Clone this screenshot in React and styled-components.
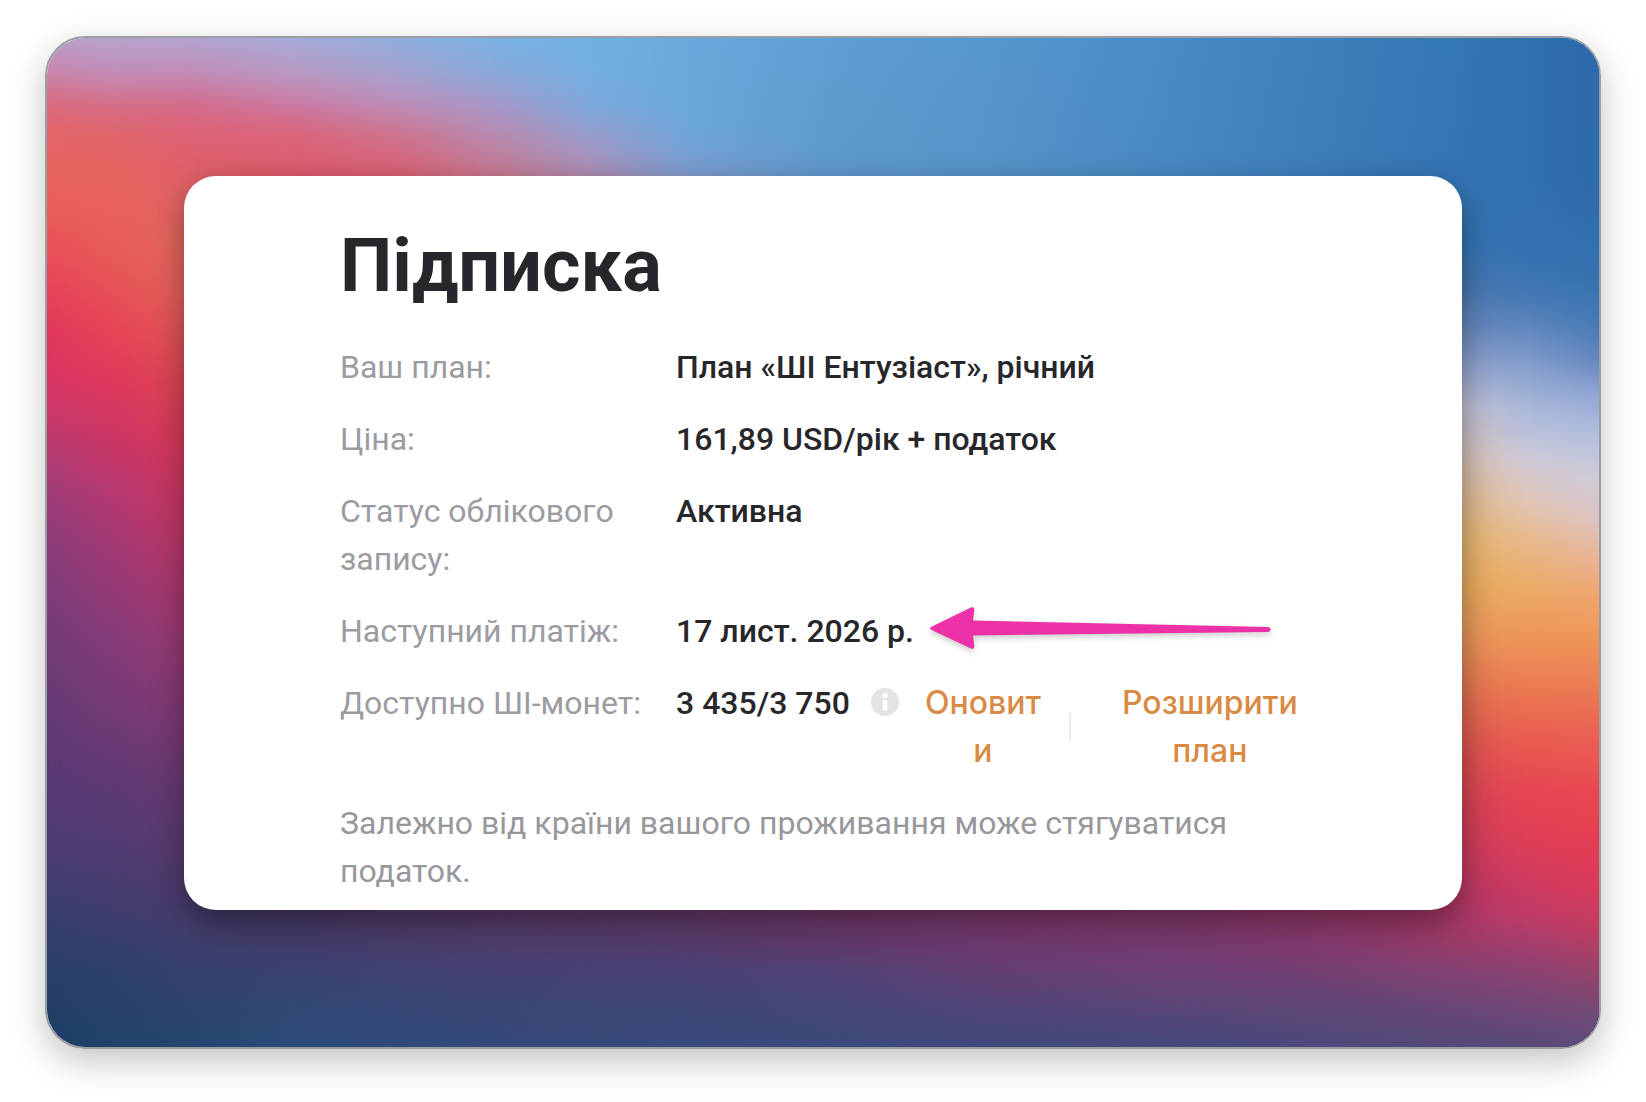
import styled, { createGlobalStyle } from "styled-components";

const GlobalStyle = createGlobalStyle`
  * {
    box-sizing: border-box;
  }
  body {
    margin: 0;
    background-color: #fff;
    color: #27272b;
    font-family: Roboto, "Open Sans", sans-serif;
    font-size: 32px;
    line-height: 48px;
  }
`;

const Page = styled.div`
  padding: 36px 45px 53px;
`;

const Frame = styled.div`
  display: grid;
  overflow: hidden;
  border: 2px solid #9a9da1;
  border-radius: 40px;
  box-shadow: 0 12px 36px rgba(0, 0, 0, 0.24);
`;

const Wallpaper = styled.div`
  grid-area: 1 / 1;
  display: grid;
`;

const Strip = styled.div`
  grid-area: 1 / 1;
  background: linear-gradient(to bottom, ${(props) => props.$colors});
  mask-image: ${(props) =>
    props.$from === null
      ? "none"
      : `linear-gradient(to right, transparent ${props.$from}, #000 ${props.$to})`};
`;

const CardHolder = styled.div`
  grid-area: 1 / 1;
  z-index: 1;
  padding: 138px 137px 137px;
`;

const Card = styled.main`
  padding: 50px 156px 15px;
  background-color: #fff;
  border-radius: 32px;
  box-shadow: 0 12px 32px rgba(0, 0, 0, 0.4);
`;

const Title = styled.h1`
  margin: 0 0 37px;
  font-size: 74px;
  font-weight: 700;
  line-height: 80px;
`;

const Details = styled.dl`
  display: grid;
  grid-template-columns: 312px 1fr;
  gap: 24px;
  margin: 0 0 24px;
`;

const Label = styled.dt`
  color: #9b9ba1;
`;

const Value = styled.dd`
  display: flex;
  align-items: flex-start;
  margin: 0;
  font-weight: 500;
`;

const Coins = styled.span`
  white-space: nowrap;
`;

const InfoButton = styled.button`
  all: unset;
  display: flex;
  flex: none;
  margin: 9px 24px 0 21px;
  cursor: pointer;
`;

const ActionButton = styled.button`
  all: unset;
  width: ${(props) => props.$width};
  color: #d98b46;
  font-family: Inter, sans-serif;
  font-weight: 500;
  text-align: center;
  word-break: ${(props) => (props.$breakAll ? "break-all" : "normal")};
  cursor: pointer;
`;

const Divider = styled.span`
  flex: none;
  align-self: center;
  width: 2px;
  height: 28px;
  margin: 0 50px 0 26px;
  background-color: #ebebeb;
`;

const Arrow = styled.svg`
  flex: none;
  margin-left: 16px;
  overflow: visible;
  filter: drop-shadow(0 3px 3px rgba(0, 0, 0, 0.2));
`;

const Note = styled.p`
  margin: 0;
  color: #97979c;
`;

// Size the wallpaper colours were picked at, used to turn them into percents.
const WALL_WIDTH = 1554;
const WALL_HEIGHT = 1010;

// [x, [y, colour, y, colour, ...]] for each vertical strip.
const strips = [
  [0, [0, "#b8a0cc", 20, "#c48fb8", 33, "#c885ab", 67, "#d96c80", 90, "#e2666c", 133, "#e8645e", 161, "#e9605a", 225, "#ea4c58", 290, "#e2385c", 335, "#db3463", 387, "#c33a6d", 451, "#a13d78", 515, "#873d7a", 612, "#703c78", 728, "#5c3a75", 805, "#4f3d72", 870, "#3a3f6d", 934, "#293f68", 1010, "#1d3f66"]],
  [70, [0, "#b9a2cc", 27, "#bc93bd", 50, "#cc7fa0", 70, "#d66d86", 100, "#e06469", 133, "#e4645f", 161, "#e9625d", 225, "#e65a58", 290, "#e74655", 350, "#dc385c", 400, "#cc3664", 451, "#b83870", 515, "#a13974", 600, "#863b78", 680, "#723a76", 750, "#5e3a74", 805, "#523c72", 870, "#423d6d", 934, "#2d406a", 1010, "#21426a"]],
  [140, [0, "#b3a4d0", 33, "#c18db6", 50, "#ca7ca2", 67, "#d46d8c", 83, "#da6680", 110, "#df6070", 133, "#e0606a", 200, "#e4685e", 260, "#e4605a", 340, "#dd4852", 400, "#d83a58", 451, "#cc3760", 515, "#b83868", 600, "#9b3a72", 680, "#803a74", 750, "#683a72", 805, "#5a3a70", 870, "#483c6e", 934, "#36406c", 1010, "#23466e"]],
  [248, [0, "#a7a9d8", 33, "#b89bc4", 50, "#c28bb2", 67, "#cb7ba3", 83, "#d46d8c", 100, "#da647a", 138, "#de5a6c", 872, "#4a3a68", 905, "#423c6a", 933, "#3a4170", 966, "#334775", 1010, "#2d4c79"]],
  [347, [0, "#92addd", 33, "#a6a3d0", 50, "#b298c4", 67, "#bd8bb4", 83, "#c87fa0", 100, "#d0728c", 138, "#da5f72", 872, "#543c68", 905, "#493d6c", 933, "#404272", 966, "#374676", 1010, "#304b79"]],
  [446, [0, "#7cb2e4", 33, "#8aa8da", 67, "#a798c8", 100, "#b888ac", 138, "#c8788f", 872, "#5c3a68", 905, "#4e3e6c", 933, "#464073", 966, "#3c4677", 1010, "#344a79"]],
  [545, [0, "#70b1e2", 33, "#74afe0", 67, "#7fa8dc", 100, "#9a9bcb", 138, "#ae8db5", 872, "#603a68", 905, "#503d6c", 933, "#484174", 966, "#3e4678", 1010, "#364a79"]],
  [644, [0, "#69a8dc", 67, "#68a8db", 100, "#6fa4d8", 138, "#7f9cd0", 872, "#683a6a", 905, "#563c6c", 933, "#4b4175", 966, "#404678", 1010, "#38497a"]],
  [777, [0, "#5f9fd4", 138, "#5f99cc", 872, "#74386a", 905, "#603a6c", 933, "#524276", 966, "#464778", 1010, "#3c497b"]],
  [950, [0, "#5597cc", 138, "#5692c8", 872, "#80386c", 905, "#703a70", 933, "#643f74", 966, "#544578", 1010, "#40497a"]],
  [1150, [0, "#4789c4", 138, "#4687c1", 872, "#8c386a", 905, "#783b70", 933, "#6c3f76", 966, "#5c4578", 1010, "#45497a"]],
  [1300, [0, "#3c7dba", 138, "#3b7bb8", 872, "#9c3868", 905, "#863a6e", 933, "#774072", 966, "#624676", 1010, "#4e497a"]],
  [1416, [0, "#3476b5", 138, "#3474b4", 200, "#3474b2", 250, "#4878b0", 290, "#6888bc", 330, "#94a4cc", 370, "#c0c0d2", 410, "#d4c0bc", 450, "#dcba98", 500, "#e4b470", 550, "#e6aa5a", 600, "#e8955a", 660, "#e2704f", 720, "#dc5050", 780, "#d04058", 830, "#c43a60", 872, "#b03868", 905, "#9c3c68", 933, "#834272", 966, "#6c4676", 1010, "#524a7a"]],
  [1485, [0, "#3070b0", 138, "#3070b0", 220, "#3572b2", 260, "#4678b4", 300, "#6a8cc2", 340, "#8fa6d0", 380, "#b0bcdc", 420, "#cccad8", 460, "#dfc6bc", 500, "#e8ba90", 550, "#ebab68", 600, "#ee955a", 650, "#ec7a52", 700, "#ea5d50", 750, "#e64752", 800, "#e03f56", 850, "#cc3a60", 880, "#be3c68", 920, "#984070", 960, "#784676", 1010, "#584a7a"]],
  [1554, [0, "#2c69aa", 150, "#2d6aab", 240, "#3472b0", 280, "#4278b4", 320, "#6286bf", 360, "#94a8d4", 400, "#b4c0de", 440, "#cfcbd8", 480, "#dcc4c4", 520, "#e9b498", 560, "#eea46c", 600, "#ee9658", 650, "#ea7c54", 700, "#ea6054", 750, "#e84a52", 800, "#e43e52", 850, "#da3a5a", 890, "#c23c60", 930, "#9c4268", 970, "#764a74", 1010, "#5e4c7c"]],
];

const percent = (value, total) => `${((value / total) * 100).toFixed(2)}%`;

const toColors = (stops) => {
  const parts = [];
  for (let i = 0; i < stops.length; i += 2) {
    parts.push(`${stops[i + 1]} ${percent(stops[i], WALL_HEIGHT)}`);
  }
  return parts.join(", ");
};

function WallpaperStrips() {
  return (
    <Wallpaper aria-hidden="true">
      {strips.map(([x, stops], i) => (
        <Strip
          key={x}
          $colors={toColors(stops)}
          $from={i === 0 ? null : percent(strips[i - 1][0], WALL_WIDTH)}
          $to={percent(x, WALL_WIDTH)}
        />
      ))}
    </Wallpaper>
  );
}

function InfoIcon() {
  return (
    <svg width="28" height="28" viewBox="0 0 28 28" aria-hidden="true">
      <circle cx="14" cy="14" r="14" fill="#e4e4e4" />
      <circle cx="14" cy="7.5" r="2.7" fill="#fff" />
      <rect x="11.6" y="12" width="4.8" height="11" rx="2.4" fill="#fff" />
    </svg>
  );
}

function PointerArrow() {
  return (
    <Arrow width="341" height="44" viewBox="0 0 341 44" aria-hidden="true">
      <path
        d="M1 20 L41 0.5 Q44.5 -0.5 44.3 3 L43 13.5 L338 19.9 Q340.6 20.2 340.6 22.5 Q340.6 24.8 338 25 L43 28.5 L44.3 39 Q44.5 42.8 41 41.6 L1.5 23 Q-1 21.5 1 20 Z"
        fill="#ec32a6"
      />
    </Arrow>
  );
}

function App() {
  return (
    <Page>
      <GlobalStyle />
      <Frame>
        <WallpaperStrips />
        <CardHolder>
          <Card>
            <Title>Підписка</Title>
            <Details>
              <Label>Ваш план:</Label>
              <Value>План «ШІ Ентузіаст», річний</Value>
              <Label>Ціна:</Label>
              <Value>161,89 USD/рік + податок</Value>
              <Label>Статус облікового запису:</Label>
              <Value>Активна</Value>
              <Label>Наступний платіж:</Label>
              <Value>
                17 лист. 2026 р.
                <PointerArrow />
              </Value>
              <Label>Доступно ШІ-монет:</Label>
              <Value>
                <Coins>3 435/3 750</Coins>
                <InfoButton type="button" aria-label="Інформація">
                  <InfoIcon />
                </InfoButton>
                <ActionButton type="button" $width="120px" $breakAll>
                  Оновити
                </ActionButton>
                <Divider />
                <ActionButton type="button" $width="178px">
                  Розширити план
                </ActionButton>
              </Value>
            </Details>
            <Note>
              Залежно від країни вашого проживання може стягуватися податок.
            </Note>
          </Card>
        </CardHolder>
      </Frame>
    </Page>
  );
}

export default App;
